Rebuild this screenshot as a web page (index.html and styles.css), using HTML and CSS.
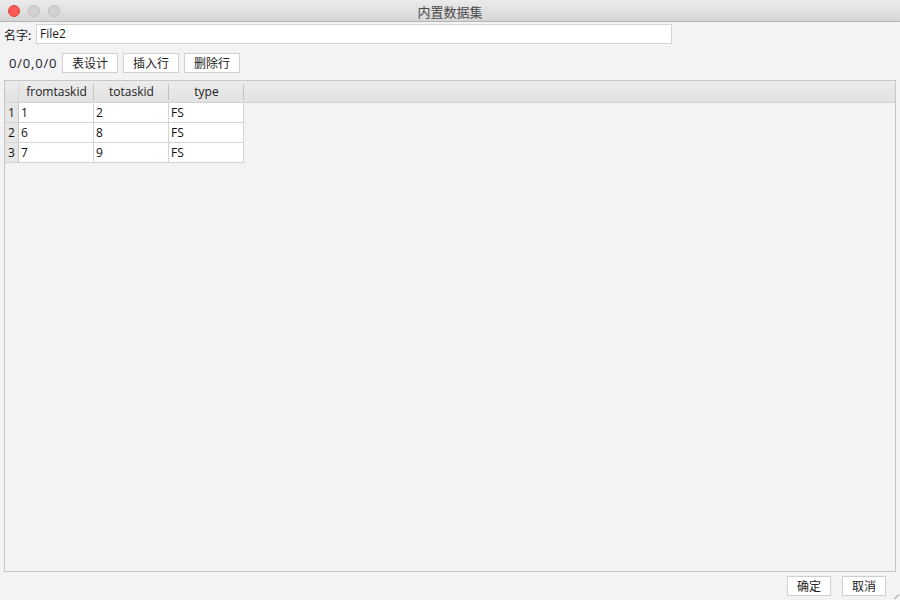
FILE: index.html
```html
<!DOCTYPE html>
<html lang="zh">
<head>
<meta charset="utf-8">
<title>内置数据集</title>
<link rel="stylesheet" href="styles.css">
</head>
<body>
<div class="window">
  <div class="titlebar">
    <div class="lights">
      <span class="light red"></span>
      <span class="light"></span>
      <span class="light"></span>
    </div>
    <div class="title">内置数据集</div>
    <div></div>
  </div>
  <div class="name-row">
    <label class="name-label">名字:</label>
    <div class="name-input">File2</div>
  </div>
  <div class="toolbar">
    <span class="counter">0/0,0/0</span>
    <button class="btn">表设计</button>
    <button class="btn">插入行</button>
    <button class="btn">删除行</button>
  </div>
  <div class="table-area">
    <div class="thead">
      <div class="th rn"></div>
      <div class="th col">fromtaskid</div>
      <div class="th col">totaskid</div>
      <div class="th col">type</div>
      <div class="th fill"></div>
    </div>
    <div class="tr">
      <div class="td rn">1</div>
      <div class="td col">1</div>
      <div class="td col">2</div>
      <div class="td col">FS</div>
    </div>
    <div class="tr">
      <div class="td rn">2</div>
      <div class="td col">6</div>
      <div class="td col">8</div>
      <div class="td col">FS</div>
    </div>
    <div class="tr">
      <div class="td rn">3</div>
      <div class="td col">7</div>
      <div class="td col">9</div>
      <div class="td col">FS</div>
    </div>
  </div>
  <div class="footer">
    <button class="btn small">确定</button>
    <button class="btn small">取消</button>
    <span class="grip"></span>
  </div>
</div>
</body>
</html>
```

FILE: styles.css
```css
* { box-sizing: border-box; }
html, body {
  margin: 0;
  padding: 0;
  width: 900px;
  height: 600px;
  overflow: hidden;
}
body {
  font-family: "Open Sans", "Noto Sans CJK SC", sans-serif;
  font-size: 12px;
  color: #1a1a1a;
  background: #f3f3f5;
}
.window {
  width: 900px;
  height: 600px;
  display: flex;
  flex-direction: column;
  background: #f3f3f5;
  position: relative;
}
.titlebar {
  height: 22px;
  flex: none;
  display: grid;
  grid-template-columns: 1fr auto 1fr;
  align-items: center;
  background: linear-gradient(#ebebeb, #d6d6d6);
  border-bottom: 1px solid #b4b4b4;
}
.lights {
  display: flex;
  gap: 8px;
  padding-left: 8px;
}
.light {
  width: 12px;
  height: 12px;
  border-radius: 50%;
  background: #d1d1d3;
  border: 1px solid #c0c0c2;
}
.light.red {
  background: #fc5b57;
  border-color: #e0443e;
}
.title {
  font-family: "Noto Sans CJK SC", sans-serif;
  font-size: 13px;
  color: #4a4a4a;
  padding-top: 1px;
}
.name-row {
  display: flex;
  align-items: center;
  height: 20px;
  margin-top: 2px;
  padding-left: 4px;
  flex: none;
}
.name-label {
  font-family: "Noto Sans CJK SC", sans-serif;
  font-size: 12px;
  width: 32px;
}
.name-input {
  width: 636px;
  height: 20px;
  background: #fff;
  border: 1px solid #d4d4d6;
  padding-left: 3px;
  line-height: 18px;
  font-size: 12px;
}
.toolbar {
  display: flex;
  align-items: center;
  gap: 5px;
  height: 20px;
  margin-top: 9px;
  padding-left: 9px;
  flex: none;
}
.counter {
  font-size: 13px;
  letter-spacing: 0.8px;
  width: 48px;
  color: #222;
}
.btn {
  font-family: "Noto Sans CJK SC", sans-serif;
  font-size: 12px;
  color: #222;
  width: 56px;
  height: 20px;
  padding: 0;
  margin: 0;
  background: #fff;
  border: 1px solid #cfcfd1;
  border-radius: 0;
  line-height: 18px;
}
.btn.small { width: 44px; }
.table-area {
  flex: 1;
  margin: 7px 4px 0 4px;
  border: 1px solid #c6c6c8;
  background: #f3f3f5;
  min-height: 0;
}
.thead {
  display: flex;
  height: 22px;
  background: linear-gradient(#ececec, #e2e2e2);
  border-bottom: 1px solid #d2d2d2;
}
.th {
  height: 21px;
  line-height: 21px;
  text-align: center;
  font-size: 12px;
  color: #222;
  position: relative;
}
.th.rn { width: 14px; }
.th.col { width: 75px; }
.th.fill { flex: 1; }
.th.rn::after,
.th.col::after {
  content: "";
  position: absolute;
  right: 0;
  top: 3px;
  height: 16px;
  border-right: 1px solid #c4c4c4;
}
.th.rn::after { border-right-color: #d8d8d8; }
.tr {
  display: flex;
  height: 20px;
}
.td {
  height: 20px;
  line-height: 20px;
  font-size: 12px;
  color: #111;
  border-bottom: 1px solid #d4d4d4;
  border-right: 1px solid #d4d4d4;
  background: #fff;
  padding-left: 2px;
}
.td.rn {
  width: 14px;
  background: #e6e6e6;
  text-align: center;
  padding-left: 0;
  border-right: 1px solid #c8c8c8;
}
.td.col { width: 75px; }
.footer {
  height: 28px;
  flex: none;
  display: flex;
  justify-content: flex-end;
  align-items: center;
  gap: 11px;
  padding-right: 14px;
  position: relative;
}
.grip {
  position: absolute;
  right: 1px;
  bottom: 1px;
  width: 6px;
  height: 6px;
  background: linear-gradient(135deg, transparent 55%, #b8b8b8 55%, #b8b8b8 70%, transparent 70%);
}
```
